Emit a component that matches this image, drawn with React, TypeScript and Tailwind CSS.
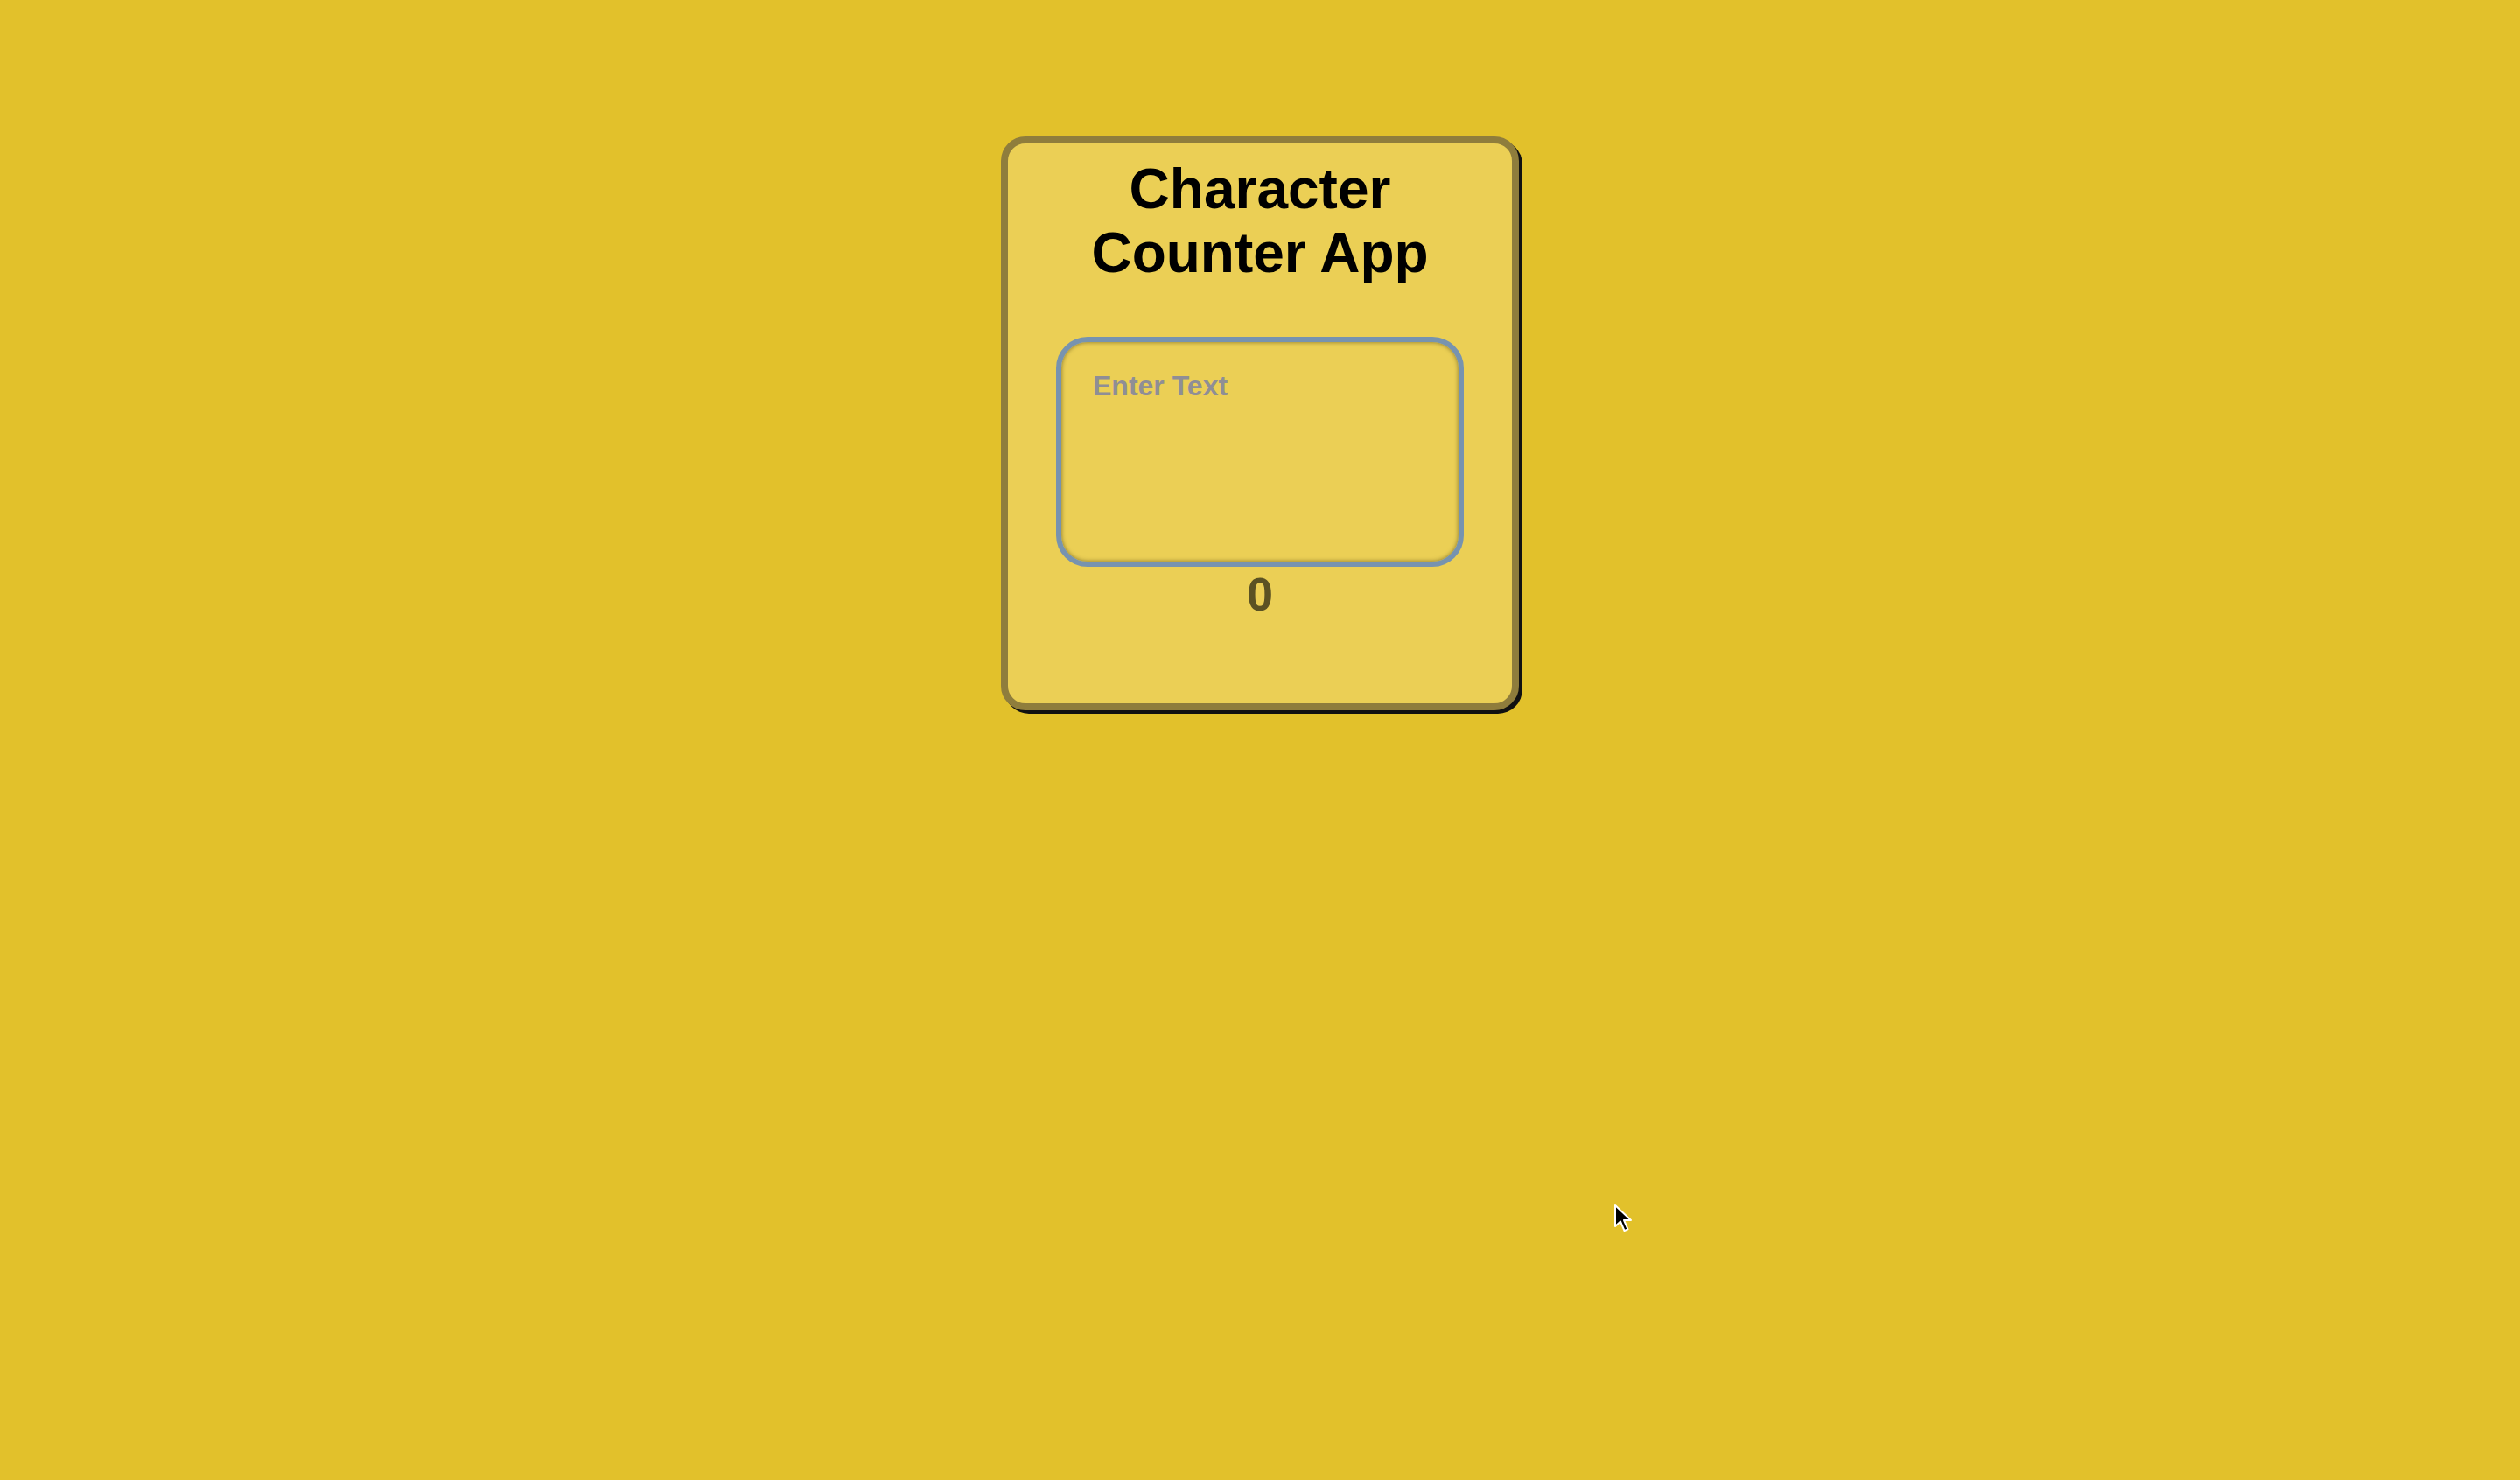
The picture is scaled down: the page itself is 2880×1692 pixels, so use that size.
import React, { useState } from "react";

const App: React.FC = () => {
  const [text, setText] = useState("");

  return (
    <div className="relative min-h-screen bg-[#e2c12b] flex justify-center pt-[156px] font-['Liberation_Sans',Arial,sans-serif]">
      <div className="w-[592px] h-[656px] rounded-[28px] border-[8px] border-[#8f7d3c] bg-[#ebcf55] shadow-[4px_4px_0_#111] flex flex-col items-center">
        <h1 className="mt-[16px] text-[64px] leading-[73px] font-bold text-black text-center px-4">
          Character Counter App
        </h1>
        <textarea
          value={text}
          onChange={(e) => setText(e.target.value)}
          placeholder="Enter Text"
          className="mt-[59px] w-[466px] h-[263px] rounded-[36px] border-[6px] border-[#7793af] bg-transparent shadow-[inset_0_0_5px_rgba(60,50,10,0.6)] pl-[36px] pr-[30px] pt-[26px] text-[32px] font-bold text-[#333] placeholder:text-[#8f8e96] outline-none resize-none"
        />
        <div className="mt-[4px] text-[54px] leading-none font-bold text-[#5b5223]">
          {text.length}
        </div>
      </div>

      {/* mouse pointer from the screenshot */}
      <svg
        className="absolute left-[1843px] top-[1376px]"
        width="24"
        height="34"
        viewBox="0 0 24 34"
      >
        <path
          d="M3 2 L3 26 L9 20.5 L13.5 31 L17.5 29.3 L13 19 L21 19 Z"
          fill="#000"
          stroke="#fff"
          strokeWidth="2"
          strokeLinejoin="round"
        />
      </svg>
    </div>
  );
};

export default App;
